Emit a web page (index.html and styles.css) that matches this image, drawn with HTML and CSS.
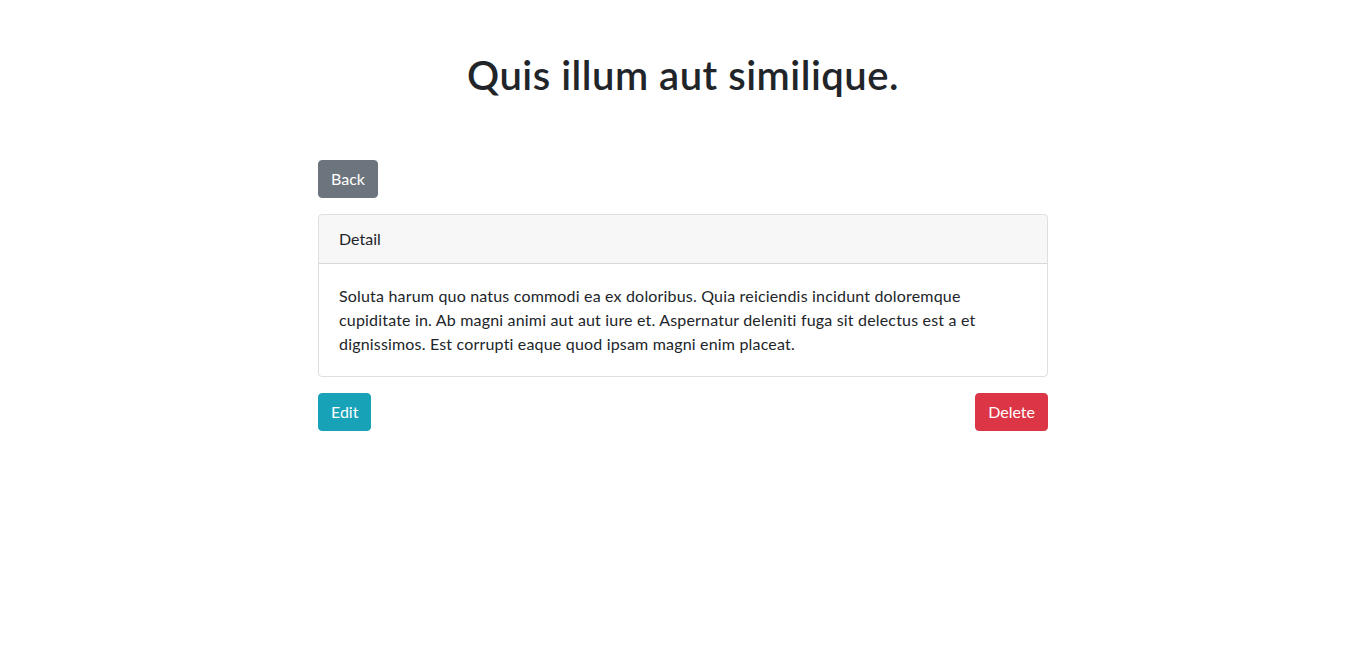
FILE: index.html
```html
<!DOCTYPE html>
<html lang="en">
<head>
<meta charset="utf-8">
<title>Quis illum aut similique.</title>
<link rel="stylesheet" href="styles.css">
</head>
<body>
<div class="container">
  <h1 class="title">Quis illum aut similique.</h1>
  <div class="content">
    <div class="top-row">
      <a class="btn btn-secondary" href="#">Back</a>
    </div>
    <div class="card">
      <div class="card-header">Detail</div>
      <div class="card-body">
        Soluta harum quo natus commodi ea ex doloribus. Quia reiciendis incidunt doloremque cupiditate in. Ab magni animi aut aut iure et. Aspernatur deleniti fuga sit delectus est a et dignissimos. Est corrupti eaque quod ipsam magni enim placeat.
      </div>
    </div>
    <div class="actions">
      <a class="btn btn-info" href="#">Edit</a>
      <button class="btn btn-danger" type="button">Delete</button>
    </div>
  </div>
</div>
</body>
</html>
```

FILE: styles.css
```css
* { box-sizing: border-box; }
html, body { margin: 0; padding: 0; }
body {
  font-family: "Lato", "Open Sans", sans-serif;
  font-size: 16px;
  line-height: 1.5;
  color: #212529;
  background: #fff;
}
.container {
  width: 1140px;
  margin: 0 auto;
  padding: 0 15px;
}
.title {
  margin: 51px 0 61px;
  font-size: 40px;
  font-weight: 600;
  line-height: 1.2;
  letter-spacing: 0.5px;
  text-align: center;
}
.content {
  width: 730px;
  margin: 0 auto;
}
.top-row { margin-bottom: 16px; }
.btn {
  display: inline-block;
  font-family: inherit;
  font-size: 16px;
  line-height: 24px;
  padding: 6px 12px;
  border: 1px solid transparent;
  border-radius: 4px;
  color: #fff;
  text-decoration: none;
  cursor: pointer;
}
.btn-secondary { background: #6c757d; border-color: #6c757d; }
.btn-info { background: #17a2b8; border-color: #17a2b8; }
.btn-danger { background: #dc3545; border-color: #dc3545; }
.card {
  border: 1px solid rgba(0,0,0,.125);
  border-radius: 4px;
  margin-bottom: 16px;
}
.card-header {
  padding: 12px 20px;
  background: rgba(0,0,0,.03);
  border-bottom: 1px solid rgba(0,0,0,.125);
  border-radius: 3px 3px 0 0;
}
.card-body {
  padding: 20px;
  letter-spacing: 0.18px;
}
.actions {
  display: flex;
  justify-content: space-between;
}
```
